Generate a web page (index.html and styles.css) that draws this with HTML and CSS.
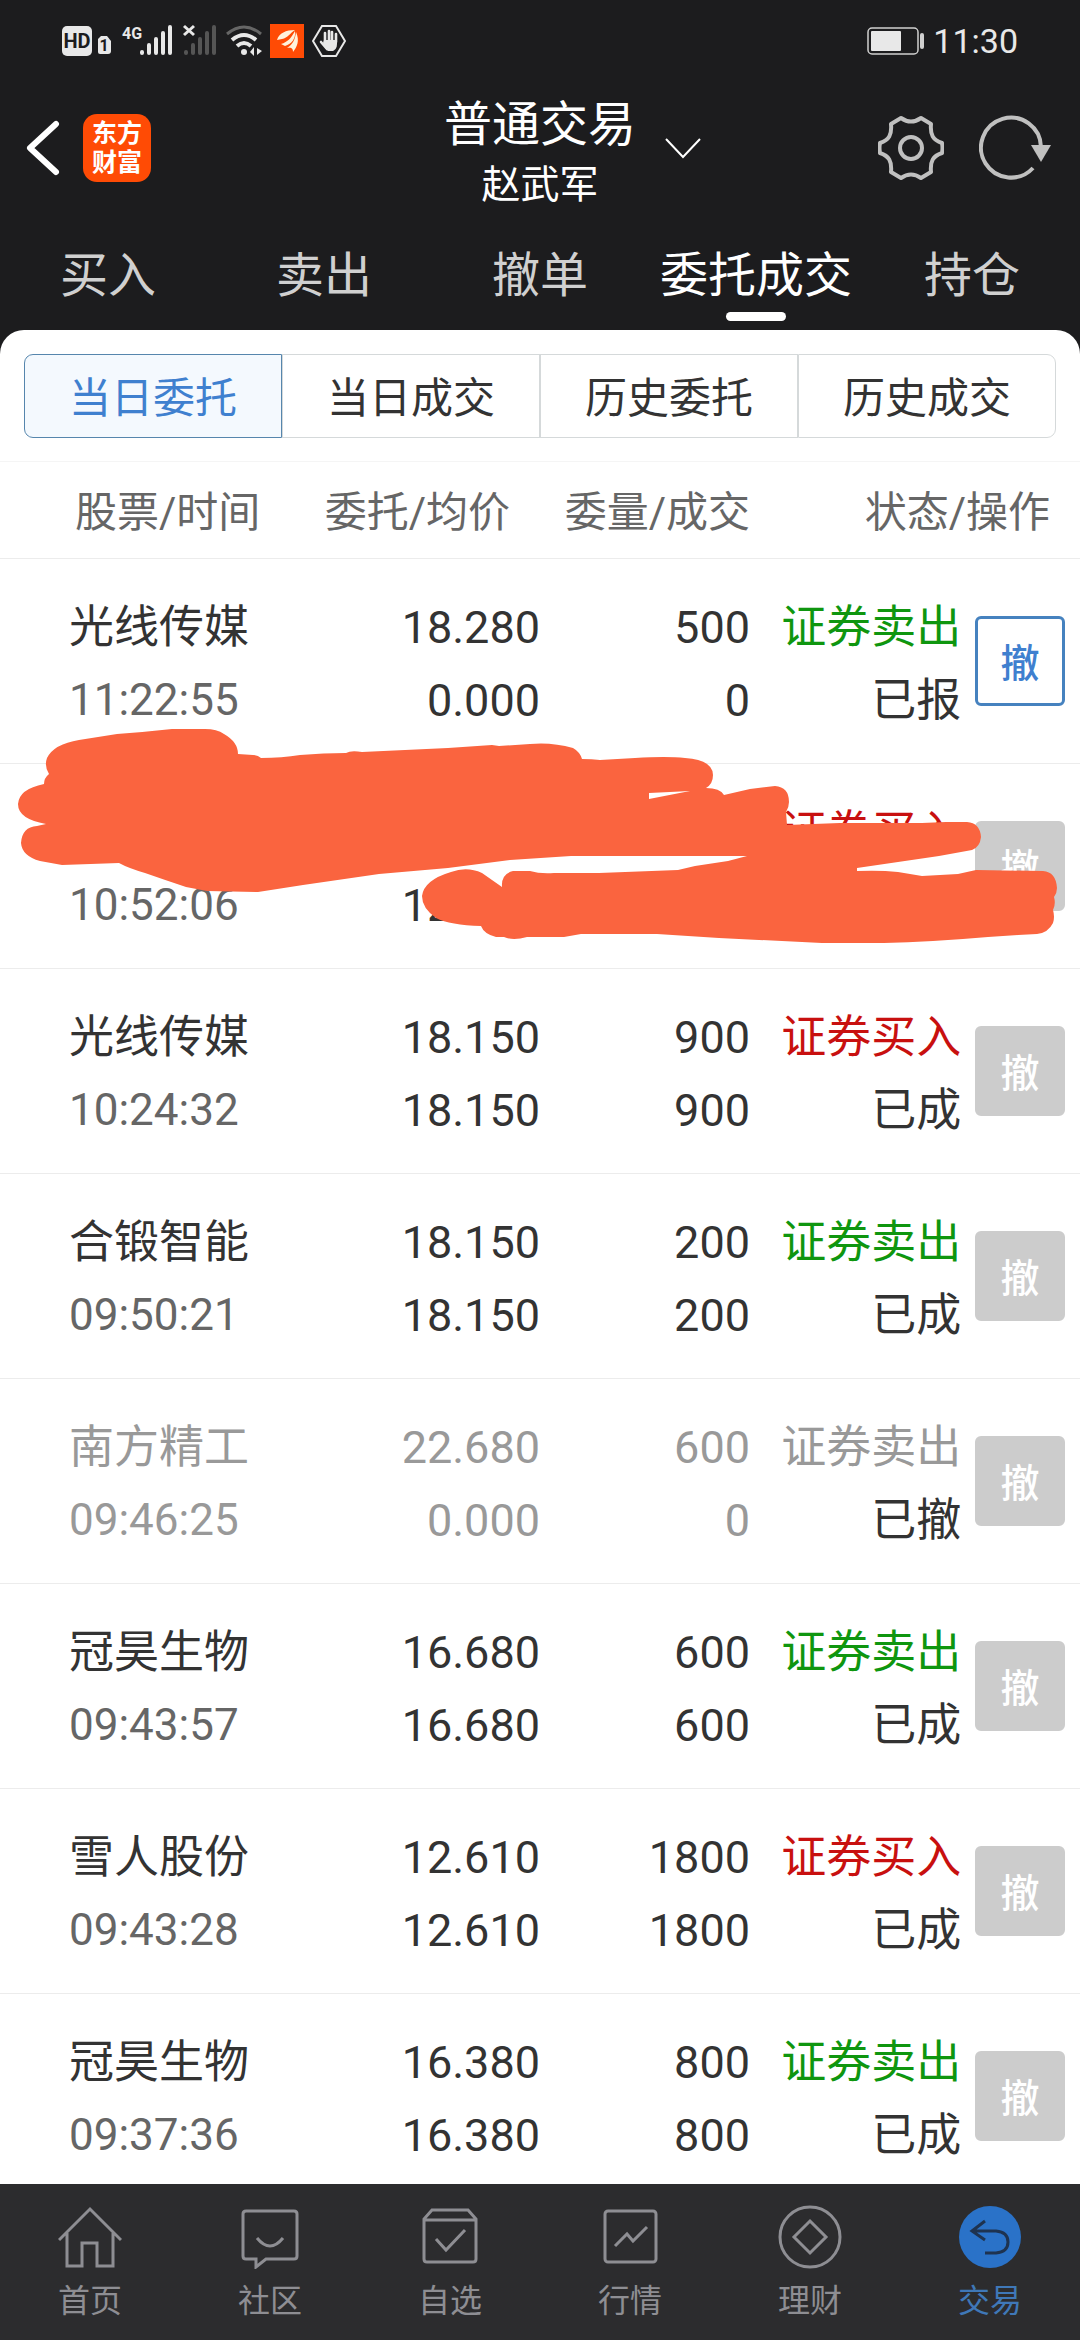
FILE: index.html
```html
<!DOCTYPE html>
<html lang="zh-CN">
<head>
  <meta charset="UTF-8">
  <meta name="viewport" content="width=device-width, initial-scale=1.0">
  <title>普通交易</title>
  <link rel="stylesheet" href="styles.css">
</head>
<body>
  <div class="status-bar">
    <div class="status-icons">
      <svg width="50" height="36" viewBox="0 0 50 36">
        <rect x="0" y="3" width="30" height="30" rx="5" fill="#e8e8e8"/>
        <text x="15" y="25" class="hd-text" text-anchor="middle">HD</text>
        <path d="M39 13h6l4 5v10a3 3 0 0 1-3 3h-8a2 2 0 0 1-2-2V16z" fill="#e8e8e8"/>
        <text x="42" y="28" class="sim-text" text-anchor="middle">1</text>
      </svg>
      <svg width="54" height="36" viewBox="0 0 54 36">
        <text x="2" y="16" class="net-text">4G</text>
        <g stroke="#e8e8e8" stroke-width="4" stroke-linecap="round">
          <path d="M22 29v1M29 22v8M36 16v14M43 10v20M50 4v26"/>
        </g>
      </svg>
      <svg width="36" height="36" viewBox="0 0 36 36">
        <path d="M4 29v1M11 22v8M18 16v14M25 10v20M32 4v26" stroke="#555" stroke-width="4" stroke-linecap="round"/>
        <path d="M2 3l10 9M12 3L2 12" stroke="#e8e8e8" stroke-width="3"/>
      </svg>
      <svg width="36" height="36" viewBox="0 0 36 36" fill="none" stroke="#e8e8e8" stroke-width="4">
        <path d="M1 11Q18-3 35 11" stroke="#666" stroke-width="3"/>
        <path d="M6 17Q18 7 30 17"/>
        <path d="M11 23Q18 17 25 23"/>
        <circle cx="18" cy="29" r="3" fill="#e8e8e8" stroke="none"/>
        <path d="M28 24v9l-4-4zM31 25l5 3-5 4z" fill="#e8e8e8" stroke="none"/>
      </svg>
      <svg width="34" height="36" viewBox="0 0 34 36">
        <rect y="1" width="34" height="34" fill="#ff4b05"/>
        <path d="M7 17C9 10 16 7 25 7C20 10 18 15 12 16zM11 21C18 19 21 15 25 8C26 15 22 21 15 23zM17 25C23 21 25 17 26 9C30 18 27 24 23 29C23 26 22 24 17 25z" fill="#fff3dc"/>
      </svg>
      <svg width="34" height="36" viewBox="0 0 34 36">
        <path d="M10 3h14l9 15-9 15H10L1 18z" fill="none" stroke="#e8e8e8" stroke-width="2"/>
        <path d="M13 19V10M17 17V8M20 17V9M24 19v-8M9 19l6 7" stroke="#e8e8e8" stroke-width="2.6" stroke-linecap="round"/>
        <path d="M12 17h13v4c0 4-2 6-4 7h-5c-3-2-4-5-5-8z" fill="#e8e8e8"/>
      </svg>
    </div>
    <div class="status-right">
      <svg width="58" height="28" viewBox="0 0 58 28">
        <rect x="1" y="1" width="50" height="26" rx="4" fill="none" stroke="#d0d0d0" stroke-width="1.5"/>
        <rect x="4" y="4" width="30" height="20" rx="1" fill="#e8e8e8"/>
        <rect x="53" y="6" width="4" height="16" rx="2" fill="#d0d0d0"/>
      </svg>
      <span class="clock">11:30</span>
    </div>
  </div>

  <header class="header">
    <div class="header-left">
      <button class="icon-btn" aria-label="返回">
        <svg width="34" height="56" viewBox="0 0 34 56"><path d="M30 4L4 28L30 52" fill="none" stroke="#fff" stroke-width="6" stroke-linecap="round" stroke-linejoin="round"/></svg>
      </button>
      <span class="logo">东方<br>财富</span>
    </div>
    <div class="title">
      <h1>普通交易</h1>
      <p>赵武军</p>
    </div>
    <div class="header-right">
      <button class="icon-btn" aria-label="切换">
        <svg width="36" height="22" viewBox="0 0 36 22"><path d="M1 2L18 20L35 2" fill="none" stroke="#fff" stroke-width="2"/></svg>
      </button>
      <div class="tools">
        <button class="icon-btn" aria-label="设置">
          <svg width="66" height="66" viewBox="-33 -33 66 66" fill="none" stroke="#c0c0c0" stroke-width="4" stroke-linejoin="round">
            <path d="M-10-30Q0-23 10-30L20-24C19-13 22-8 31-5Q32 0 31 5C22 8 19 13 20 24L10 30Q0 23-10 30L-20 24C-19 13-22 8-31 5Q-32 0-31-5C-22-8-19-13-20-24Z"/>
            <circle r="11"/>
          </svg>
        </button>
        <button class="icon-btn" aria-label="刷新">
          <svg width="72" height="66" viewBox="0 0 72 66">
            <path d="M62 32A30 30 0 1 0 54 53" fill="none" stroke="#c0c0c0" stroke-width="4"/>
            <path d="M52 30h20L62 47z" fill="#c0c0c0"/>
          </svg>
        </button>
      </div>
    </div>
  </header>

  <nav class="tabs">
    <a href="#">买入</a>
    <a href="#">卖出</a>
    <a href="#">撤单</a>
    <a href="#" class="active">委托成交</a>
    <a href="#">持仓</a>
  </nav>

  <main class="sheet">
    <div class="segments">
      <button class="active">当日委托</button>
      <button>当日成交</button>
      <button>历史委托</button>
      <button>历史成交</button>
    </div>

    <table class="orders">
      <colgroup>
        <col class="col-name"><col class="col-price"><col class="col-amount"><col class="col-state"><col class="col-action">
      </colgroup>
      <thead>
        <tr>
          <th class="name">股票/时间</th>
          <th class="price">委托/均价</th>
          <th class="amount">委量/成交</th>
          <th class="state" colspan="2">状态/操作</th>
        </tr>
      </thead>
      <tbody>
        <tr>
          <td class="name">光线传媒<span class="time">11:22:55</span></td>
          <td class="price">18.280<br>0.000</td>
          <td class="amount">500<br>0</td>
          <td class="state"><span class="sell">证券卖出</span><br>已报</td>
          <td class="action"><button class="cancel">撤</button></td>
        </tr>
        <tr class="marked">
          <td class="name">&nbsp;<span class="time">10:52:06</span>
            <svg class="scribble" viewBox="0 0 1080 226" aria-hidden="true">
              <path fill="#fa643f" fill-rule="evenodd" d="M49 54Q44 46 47 38Q54 24 79 20Q98 17 117 14Q145 12 172 9H205Q217 9 224 14Q238 22 238 34L253 35Q258 35 261 38Q282 38 300 35Q324 33 346 33Q351 30 362 32L448 28L492 25L499 26L530 24Q552 22 573 28Q580 32 582 39Q592 39 600 40L635 38Q667 36 685 38Q713 40 713 55Q713 64 706 68Q720 68 724 75L750 69L775 66Q789 67 789 82Q789 87 786 92L787 105L840 103H922L946 102H967Q980 103 981 117Q980 127 972 130L939 136L857 148V151Q880 150 898 152L922 156L958 154L976 150L1043 151Q1056 152 1057 168Q1057 173 1054 177Q1056 184 1053 190Q1055 197 1053 203Q1048 213 1037 214L1018 215L988 217Q930 222 884 223H822L719 218L657 214H581L564 217H527Q513 221 504 217H496Q484 214 481 206Q450 205 436 198Q422 188 422 176Q424 160 451 152Q467 146 482 153L502 167Q501 154 513 151H530Q540 154 554 153H599L678 150L695 146L728 141L747 136H571L510 140L448 148L379 154L303 165L258 172L207 171L186 167Q165 160 145 153Q128 148 119 143L62 145L40 141Q22 136 21 123Q22 107 37 106L46 104Q18 99 18 84Q19 69 44 64Q44 58 49 54ZM649 73L670 72L690 71L649 79Z"/>
            </svg>
          </td>
          <td class="price">&nbsp;<br>12.000</td>
          <td class="amount"></td>
          <td class="state"><span class="buy">证券买入</span><br>&nbsp;</td>
          <td class="action"><button class="cancel" disabled>撤</button></td>
        </tr>
        <tr>
          <td class="name">光线传媒<span class="time">10:24:32</span></td>
          <td class="price">18.150<br>18.150</td>
          <td class="amount">900<br>900</td>
          <td class="state"><span class="buy">证券买入</span><br>已成</td>
          <td class="action"><button class="cancel" disabled>撤</button></td>
        </tr>
        <tr>
          <td class="name">合锻智能<span class="time">09:50:21</span></td>
          <td class="price">18.150<br>18.150</td>
          <td class="amount">200<br>200</td>
          <td class="state"><span class="sell">证券卖出</span><br>已成</td>
          <td class="action"><button class="cancel" disabled>撤</button></td>
        </tr>
        <tr class="revoked">
          <td class="name">南方精工<span class="time">09:46:25</span></td>
          <td class="price">22.680<br>0.000</td>
          <td class="amount">600<br>0</td>
          <td class="state"><span class="sell">证券卖出</span><br>已撤</td>
          <td class="action"><button class="cancel" disabled>撤</button></td>
        </tr>
        <tr>
          <td class="name">冠昊生物<span class="time">09:43:57</span></td>
          <td class="price">16.680<br>16.680</td>
          <td class="amount">600<br>600</td>
          <td class="state"><span class="sell">证券卖出</span><br>已成</td>
          <td class="action"><button class="cancel" disabled>撤</button></td>
        </tr>
        <tr>
          <td class="name">雪人股份<span class="time">09:43:28</span></td>
          <td class="price">12.610<br>12.610</td>
          <td class="amount">1800<br>1800</td>
          <td class="state"><span class="buy">证券买入</span><br>已成</td>
          <td class="action"><button class="cancel" disabled>撤</button></td>
        </tr>
        <tr>
          <td class="name">冠昊生物<span class="time">09:37:36</span></td>
          <td class="price">16.380<br>16.380</td>
          <td class="amount">800<br>800</td>
          <td class="state"><span class="sell">证券卖出</span><br>已成</td>
          <td class="action"><button class="cancel" disabled>撤</button></td>
        </tr>
      </tbody>
    </table>
  </main>

  <nav class="bottom-nav">
    <a href="#">
      <svg viewBox="0 0 64 64"><path d="M1 35L32 4L63 35M9 28V61H24V38H39V61H55V28"/></svg>
      首页
    </a>
    <a href="#">
      <svg viewBox="0 0 64 64"><path d="M8 6H56Q59 6 59 9V51Q59 54 56 54H28L18 62V54H8Q5 54 5 51V9Q5 6 8 6Z"/><path d="M19 33Q32 49 45 33"/></svg>
      社区
    </a>
    <a href="#">
      <svg viewBox="0 0 64 64"><path d="M14 5H50L58 14V54Q58 57 55 57H9Q6 57 6 54V14ZM6 15H58M18 34L28 45L47 25"/></svg>
      自选
    </a>
    <a href="#">
      <svg viewBox="0 0 64 64"><rect x="7" y="6" width="51" height="51" rx="3"/><path d="M17 41L29 29L35 36L49 22"/></svg>
      行情
    </a>
    <a href="#">
      <svg viewBox="0 0 64 64"><circle cx="32" cy="32" r="30"/><path d="M32 16L48 32L32 48L16 32Z"/></svg>
      理财
    </a>
    <a href="#" class="active">
      <svg viewBox="0 0 64 64"><circle class="disc" cx="32" cy="32" r="31"/><path d="M27 16L14 26L27 35M14 26H38Q50 27 50 37Q50 47 38 48H27"/></svg>
      交易
    </a>
  </nav>
</body>
</html>
```

FILE: styles.css
```css
* {
  box-sizing: border-box;
}
body {
  font-family: Roboto, 'Noto Sans CJK SC', sans-serif;
  background: #1c1c1e;
  color: #333;
  margin: 0;
  height: 100vh;
  display: flex;
  flex-direction: column;
}
a {
  color: inherit;
  text-decoration: none;
}
button {
  font-family: inherit;
  padding: 0;
  border: 0;
  background: none;
}
svg {
  display: block;
}

/* status bar */
.status-bar {
  display: flex;
  justify-content: space-between;
  align-items: center;
  height: 82px;
  padding: 0 62px;
  color: #e8e8e8;
}
.status-icons,
.status-right {
  display: flex;
  align-items: center;
  gap: 8px;
}
.clock {
  font-size: 34px;
}
.hd-text {
  font-size: 20px;
  font-weight: bold;
  fill: #1c1c1e;
}
.sim-text {
  font-size: 16px;
  font-weight: bold;
  fill: #1c1c1e;
}
.net-text {
  font-size: 16px;
  font-weight: bold;
  fill: #e8e8e8;
}

/* header */
.header {
  display: grid;
  grid-template-columns: 1fr auto 1fr;
  align-items: center;
  height: 132px;
  color: #fff;
}
.header-left {
  display: flex;
  align-items: center;
  gap: 23px;
  padding-left: 26px;
}
.logo {
  width: 68px;
  height: 68px;
  padding-top: 5px;
  border-radius: 14px;
  background: #ff4b05;
  font-size: 25px;
  font-weight: bold;
  line-height: 29px;
  text-align: center;
}
.title {
  padding-top: 2px;
  text-align: center;
}
.title h1 {
  margin: 0;
  font-size: 48px;
  font-weight: normal;
  line-height: 72px;
}
.title p {
  margin: 0;
  font-size: 39px;
  line-height: 48px;
}
.header-right {
  display: flex;
  justify-content: space-between;
  align-items: center;
  padding: 0 29px;
}
.tools {
  display: flex;
  gap: 35px;
}

/* trade tabs */
.tabs {
  display: grid;
  grid-template-columns: repeat(5, 1fr);
  padding: 30px 0 9px;
  color: #d0d0d0;
  font-size: 48px;
  line-height: 64px;
  text-align: center;
}
.tabs a::after {
  content: '';
  display: block;
  width: 60px;
  height: 9px;
  margin: 4px auto 0;
  border-radius: 5px;
}
.tabs .active {
  color: #fff;
}
.tabs .active::after {
  background: #fff;
}

/* white sheet */
.sheet {
  flex: 1;
  min-height: 0;
  overflow: hidden;
  background: #fff;
  border-radius: 24px 24px 0 0;
}
.segments {
  display: grid;
  grid-template-columns: repeat(4, 1fr);
  padding: 24px 24px 23px;
  border-bottom: 1px solid #f5f5f5;
}
.segments button {
  height: 84px;
  padding-bottom: 3px;
  border: 1px solid #d5d9da;
  color: #333;
  font-size: 42px;
}
.segments button:first-child {
  border-radius: 9px 0 0 9px;
}
.segments button:last-child {
  border-radius: 0 9px 9px 0;
}
.segments .active {
  border-color: #5686ad;
  background: #f4f9fe;
  color: #3f80cf;
}

/* order list */
.orders {
  width: 100%;
  table-layout: fixed;
  border-spacing: 0;
}
.col-name {
  width: 28%;
}
.col-price {
  width: 22%;
}
.col-amount {
  width: 20%;
}
.col-state {
  width: 19%;
}
.col-action {
  width: 11%;
}
.orders th,
.orders td {
  padding: 0;
  border-bottom: 1px solid #ececec;
  text-align: right;
  white-space: nowrap;
}
.orders th {
  height: 97px;
  padding-bottom: 3px;
  color: #666;
  font-size: 42px;
  font-weight: normal;
}
.orders td {
  height: 205px;
  padding-top: 5px;
  font-size: 45px;
  line-height: 73px;
}
.orders .name {
  padding-left: 69px;
  text-align: left;
}
.orders th.name {
  padding-left: 75px;
}
.orders th.price,
.orders th.state {
  padding-right: 30px;
}
.orders .amount {
  padding-right: 6px;
}
.orders td.action {
  padding: 0 15px 0 0;
}
.time {
  display: block;
  color: #666;
  font-size: 44px;
}
.sell {
  color: #0f960f;
}
.buy {
  color: #c8100f;
}
.revoked .name,
.revoked .time,
.revoked .price,
.revoked .amount,
.revoked .sell {
  color: #999;
}
.cancel {
  display: block;
  width: 90px;
  height: 90px;
  margin-left: auto;
  padding-bottom: 3px;
  border: 3px solid #4682bf;
  border-radius: 6px;
  color: #3f80cf;
  font-size: 39px;
  font-weight: 500;
}
.cancel:disabled {
  border-color: #ccc;
  background: #ccc;
  color: #fff;
}
.marked {
  position: relative;
}
.scribble {
  position: absolute;
  left: 0;
  top: -44px;
  width: 100%;
}

/* bottom navigation */
.bottom-nav {
  display: grid;
  grid-template-columns: repeat(6, 1fr);
  height: 156px;
  padding-top: 21px;
  background: #2c2c2e;
  color: #8e8e93;
  font-size: 32px;
  line-height: 44px;
  text-align: center;
}
.bottom-nav svg {
  width: 64px;
  height: 64px;
  margin: 0 auto 10px;
  fill: none;
  stroke: #8e8e93;
  stroke-width: 3;
}
.bottom-nav .active {
  color: #3f78b8;
}
.bottom-nav .active svg {
  stroke: #1e3350;
}
.bottom-nav .disc {
  fill: #2a72c8;
  stroke: none;
}
```
